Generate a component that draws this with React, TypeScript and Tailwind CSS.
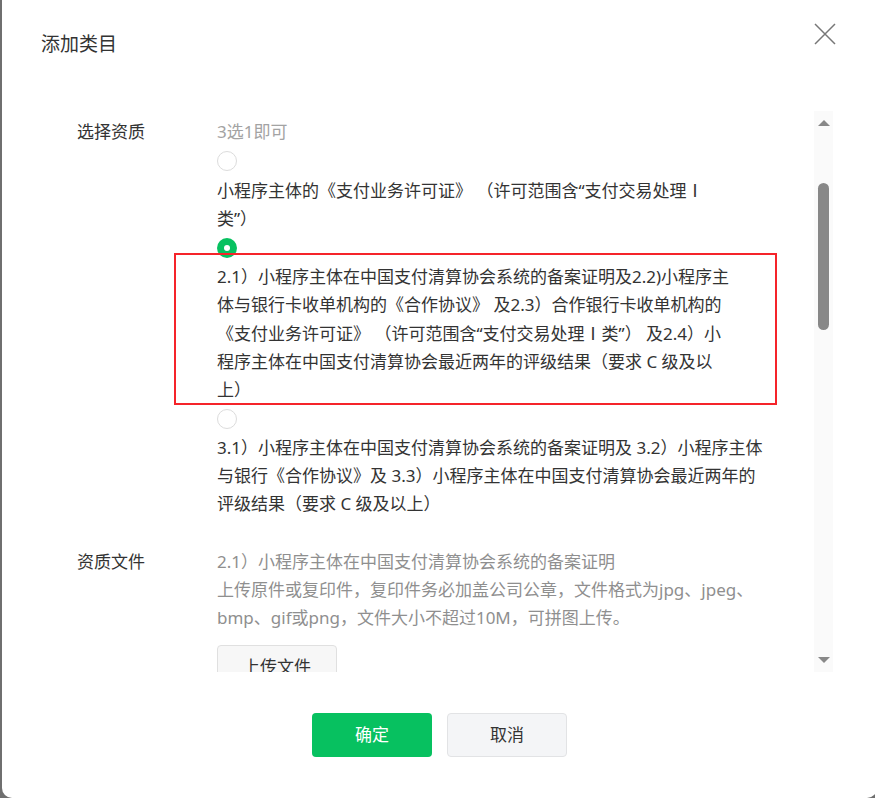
import React from 'react';

const font = { fontFamily: '"Noto Sans", "Noto Sans CJK SC", sans-serif' };

const Radio: React.FC<{ checked?: boolean }> = ({ checked }) => (
    <div className="h-[30px] pt-[5px]">
        {checked ? (
            <div className="w-[20px] h-[20px] rounded-full bg-[#07c160] flex items-center justify-center">
                <div className="w-[6px] h-[6px] rounded-full bg-white" />
            </div>
        ) : (
            <div className="w-[20px] h-[20px] rounded-full border border-[#dcdcdc] bg-white" />
        )}
    </div>
);

// roman numeral looks serif in the reference, take it from the CJK font
const renderLine = (l: string) => {
    const parts = l.split("Ⅰ");
    return parts.map((p, i) => (
        <React.Fragment key={i}>
            {p}
            {i < parts.length - 1 && (
                <span style={{ fontFamily: '"Noto Sans CJK SC", serif' }}>Ⅰ</span>
            )}
        </React.Fragment>
    ));
};

const Lines: React.FC<{ lines: string[]; gray?: boolean }> = ({ lines, gray }) => (
    <div className={gray ? "text-[#8f8f8f]" : "text-[#333]"}>
        {lines.map((l, i) => (
            <div key={i} className="whitespace-nowrap leading-[28px]">{renderLine(l)}</div>
        ))}
    </div>
);

const App: React.FC = () => {
    const options = [
        ["小程序主体的《支付业务许可证》 （许可范围含“支付交易处理Ⅰ", "类”）"],
        [
            "2.1）小程序主体在中国支付清算协会系统的备案证明及2.2)小程序主",
            "体与银行卡收单机构的《合作协议》 及2.3）合作银行卡收单机构的",
            "《支付业务许可证》 （许可范围含“支付交易处理Ⅰ类”） 及2.4）小",
            "程序主体在中国支付清算协会最近两年的评级结果（要求 C 级及以",
            "上）",
        ],
        [
            "3.1）小程序主体在中国支付清算协会系统的备案证明及 3.2）小程序主体",
            "与银行《合作协议》及 3.3）小程序主体在中国支付清算协会最近两年的",
            "评级结果（要求 C 级及以上）",
        ],
    ];

    return (
        <div className="relative w-[875px] h-[798px] overflow-hidden bg-[#6f6f6f] text-[17px]" style={font}>
            {/* Dialog */}
            <div className="ml-[2px] w-[875px] h-[798px] bg-white rounded-b-[10px] flex flex-col">
                {/* Header */}
                <div className="h-[111px] flex justify-between pl-[39px] pr-[41px]">
                    <h2 className="pt-[30px] text-[19px] leading-[28px] text-[#333]">添加类目</h2>
                    <button className="mt-[23px] w-[22px] h-[22px]">
                        <svg viewBox="0 0 22 22" width="22" height="22">
                            <path d="M1 1 L21 21 M21 1 L1 21" stroke="#777" strokeWidth="1.5" fill="none" />
                        </svg>
                    </button>
                </div>

                {/* Scroll area */}
                <div className="h-[561px] flex overflow-hidden">
                    <div className="flex-1 pl-[75px] pt-[7px]">
                        <div className="flex">
                            <div className="w-[140px] shrink-0 leading-[28px] text-[#333]">选择资质</div>
                            <div>
                                <div className="leading-[28px] text-[#a3a3a3]">3选1即可</div>
                                {options.map((lines, i) => (
                                    <div key={i}>
                                        <Radio checked={i === 1} />
                                        <Lines lines={lines} />
                                    </div>
                                ))}
                            </div>
                        </div>

                        <div className="flex mt-[30px]">
                            <div className="w-[140px] shrink-0 leading-[28px] text-[#333]">资质文件</div>
                            <div>
                                <Lines
                                    gray
                                    lines={[
                                        "2.1）小程序主体在中国支付清算协会系统的备案证明",
                                        "上传原件或复印件，复印件务必加盖公司公章，文件格式为jpg、jpeg、",
                                        "bmp、gif或png，文件大小不超过10M，可拼图上传。",
                                    ]}
                                />
                                <button className="mt-[13px] w-[120px] h-[44px] rounded-[4px] border border-[#e0e0e0] bg-[#f7f7f7] text-[#333]">
                                    上传文件
                                </button>
                            </div>
                        </div>
                    </div>

                    {/* Scrollbar */}
                    <div className="w-[19px] mr-[44px] bg-[#fafafa] flex flex-col items-center">
                        <div className="pt-[9px] h-[22px]">
                            <div className="w-0 h-0 border-l-[6px] border-r-[6px] border-b-[6px] border-l-transparent border-r-transparent border-b-[#888]" />
                        </div>
                        <div className="mt-[50px] w-[11px] h-[147px] rounded-full bg-[#888]" />
                        <div className="mt-auto mb-[9px] w-0 h-0 border-l-[6px] border-r-[6px] border-t-[6px] border-l-transparent border-r-transparent border-t-[#888]" />
                    </div>
                </div>

                {/* Footer */}
                <div className="flex justify-center gap-[15px] pt-[41px]">
                    <button className="w-[120px] h-[44px] rounded-[4px] bg-[#07c160] text-white">确定</button>
                    <button className="w-[120px] h-[44px] rounded-[4px] border border-[#e2e3e5] bg-[#f4f5f7] text-[#333]">取消</button>
                </div>
            </div>

            {/* Red annotation box */}
            <div className="absolute left-[174px] top-[253px] w-[603px] h-[152px] border-2 border-[#f5242a]" />
        </div>
    );
};

export default App;
